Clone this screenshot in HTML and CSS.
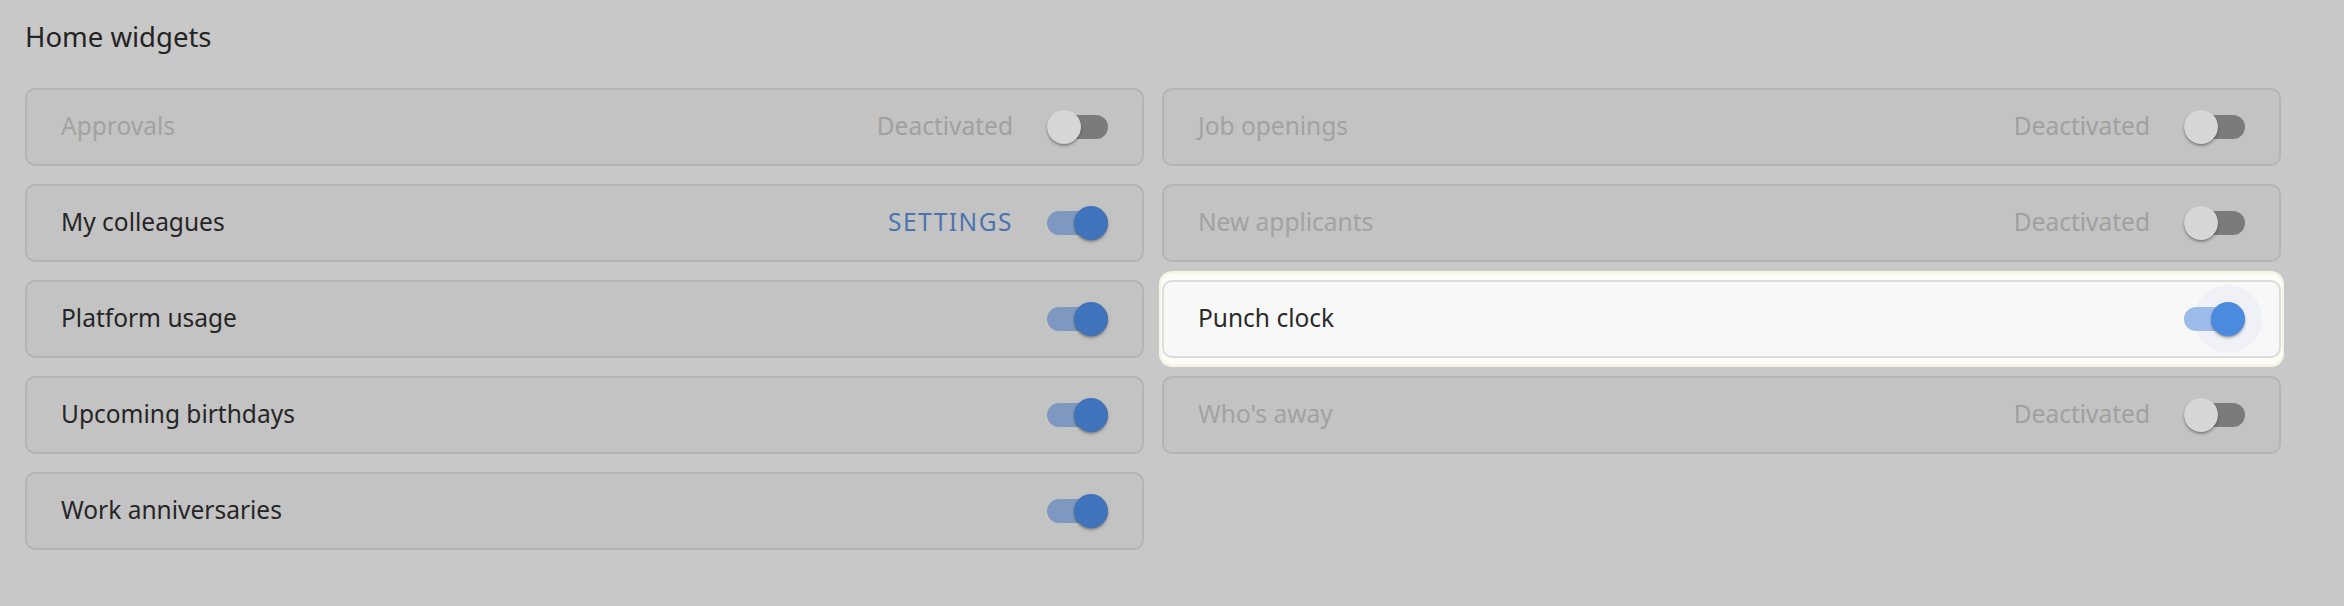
FILE: index.html
```html
<!DOCTYPE html>
<html lang="en">
<head>
<meta charset="utf-8">
<title>Home widgets</title>
<link rel="stylesheet" href="styles.css">
</head>
<body>
<main class="page">
  <h1 class="title">Home widgets</h1>
  <div class="grid">
    <div class="card is-off">
      <span class="label">Approvals</span>
      <span class="status">Deactivated</span>
      <span class="switch off"><span class="track"></span><span class="thumb"></span></span>
    </div>
    <div class="card is-off">
      <span class="label">Job openings</span>
      <span class="status">Deactivated</span>
      <span class="switch off"><span class="track"></span><span class="thumb"></span></span>
    </div>
    <div class="card">
      <span class="label">My colleagues</span>
      <span class="link">SETTINGS</span>
      <span class="switch on"><span class="track"></span><span class="thumb"></span></span>
    </div>
    <div class="card is-off">
      <span class="label">New applicants</span>
      <span class="status">Deactivated</span>
      <span class="switch off"><span class="track"></span><span class="thumb"></span></span>
    </div>
    <div class="card">
      <span class="label">Platform usage</span>
      <span class="switch on"><span class="track"></span><span class="thumb"></span></span>
    </div>
    <div class="card spotlight">
      <span class="label">Punch clock</span>
      <span class="switch on focus"><span class="halo"></span><span class="track"></span><span class="thumb"></span></span>
    </div>
    <div class="card">
      <span class="label">Upcoming birthdays</span>
      <span class="switch on"><span class="track"></span><span class="thumb"></span></span>
    </div>
    <div class="card is-off">
      <span class="label">Who's away</span>
      <span class="status">Deactivated</span>
      <span class="switch off"><span class="track"></span><span class="thumb"></span></span>
    </div>
    <div class="card">
      <span class="label">Work anniversaries</span>
      <span class="switch on"><span class="track"></span><span class="thumb"></span></span>
    </div>
  </div>
</main>
</body>
</html>
```

FILE: styles.css
```css
html, body {
  margin: 0;
  padding: 0;
  background: #c8c8c8;
}

body {
  font-family: "Noto Sans", "Open Sans", sans-serif;
  color: #262626;
}

.page {
  width: 2256px;
  padding: 20px 0 0 25px;
}

.title {
  margin: 0 0 34px 0;
  font-size: 27.5px;
  line-height: 34px;
  font-weight: 400;
  color: #242424;
}

.grid {
  display: grid;
  grid-template-columns: 1fr 1fr;
  column-gap: 18px;
  row-gap: 18px;
}

.card {
  box-sizing: border-box;
  height: 78px;
  border: 2px solid #b4b4b4;
  border-radius: 10px;
  background: #c3c3c3;
  display: flex;
  align-items: center;
  padding: 0 34px;
  font-size: 24.5px;
}

.label {
  flex: 1;
  padding-bottom: 3px;
}

.is-off .label {
  color: #a2a2a2;
}

.status {
  color: #a0a0a0;
  margin-right: 34px;
  padding-bottom: 3px;
}

.link {
  color: #4a74b0;
  letter-spacing: 1.5px;
  margin-right: 34px;
  padding-bottom: 3px;
}

.spotlight {
  background: #f8f8f8;
  border-color: #dcdcdc;
  box-shadow:
    0 -5px 0 1px #fdfdfa,
    0 5px 0 1px #fdfdfa,
    0 -6px 0 3px #f6f4e4,
    0 6px 0 3px #f6f4e4;
}

.spotlight .label {
  color: #2a2a2a;
}

.switch {
  position: relative;
  width: 61px;
  height: 34px;
  flex: none;
}

.track {
  position: absolute;
  left: 0;
  right: 0;
  top: 5px;
  height: 24px;
  border-radius: 12px;
}

.thumb {
  position: absolute;
  top: 0;
  width: 34px;
  height: 34px;
  border-radius: 50%;
  box-shadow: 0 2px 3px rgba(0, 0, 0, 0.28), 0 1px 1px rgba(0, 0, 0, 0.12);
}

.off .track {
  background: #7b7b7b;
}

.off .thumb {
  left: 0;
  background: #d6d6d6;
}

.on .track {
  background: #7f98c1;
}

.on .thumb {
  right: 0;
  background: #3f73bb;
}

.focus .track {
  background: #9dbcea;
}

.focus .thumb {
  background: #4a8be0;
}

.halo {
  position: absolute;
  width: 68px;
  height: 68px;
  border-radius: 50%;
  right: -17px;
  top: -17px;
  background: #f0f1f6;
}
```
